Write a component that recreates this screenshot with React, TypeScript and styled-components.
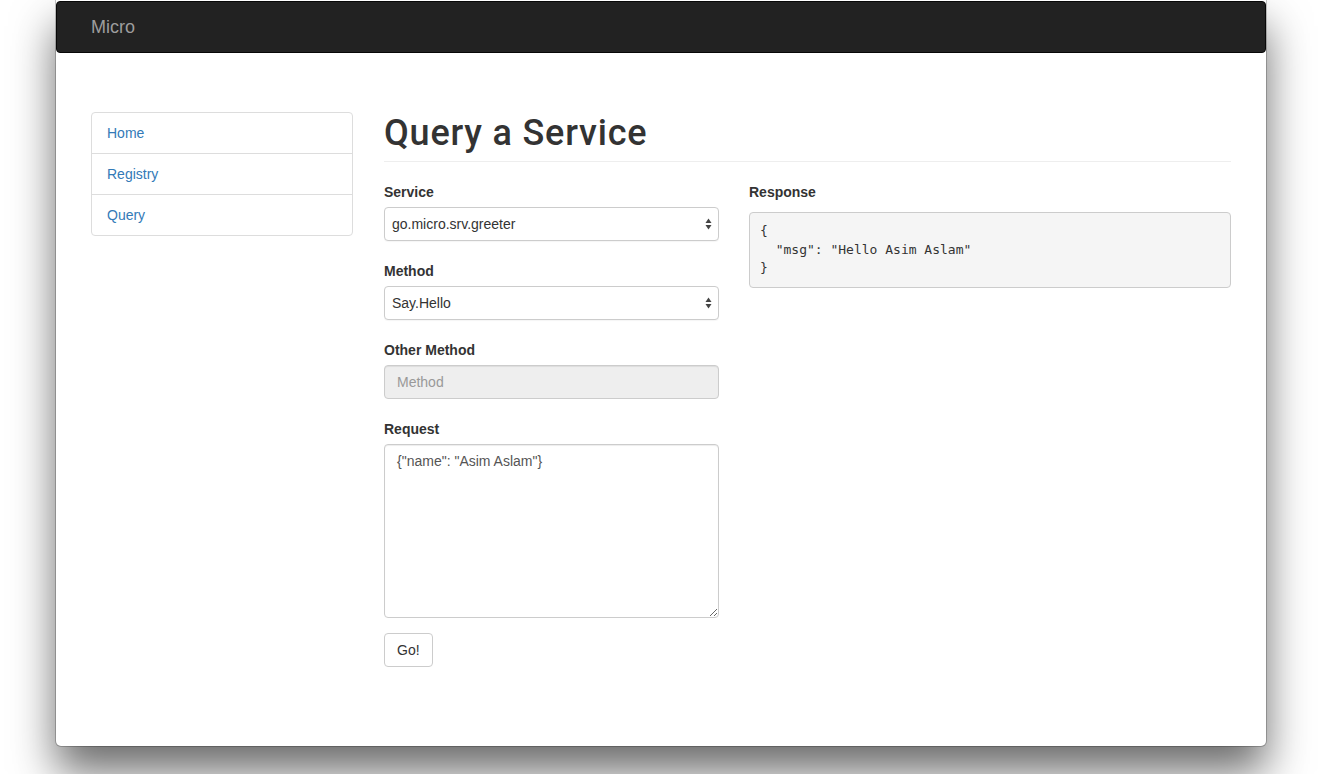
import * as React from 'react';
import styled, { createGlobalStyle } from 'styled-components';

const GlobalStyle = createGlobalStyle`
  html, body {
    margin: 0;
    padding: 0;
    background: #ffffff;
  }
  body {
    font-family: "Liberation Sans", Arial, sans-serif;
    font-size: 14px;
    line-height: 1.42857;
    color: #333;
    overflow: hidden;
  }
  * { box-sizing: border-box; }
`;

const Desktop = styled.div`
  height: 774px;
  padding-left: 56px;
`;

const Window = styled.div`
  width: 1210px;
  height: 746px;
  background: #fff;
  border-radius: 0 0 5px 5px;
  box-shadow: 0 26px 44px rgba(0, 0, 0, 0.58), 0 0 0 1px rgba(0, 0, 0, 0.22);
  overflow: hidden;
`;

const NavBar = styled.div`
  height: 52px;
  margin-top: 1px;
  background: #222;
  border: 1px solid #080808;
  border-radius: 4px;
  padding: 0 20px;
`;

const Brand = styled.div`
  padding: 15px 14px;
  font-size: 18px;
  line-height: 20px;
  color: #9d9d9d;
`;

const Container = styled.div`
  padding: 59px 35px 0;
  display: grid;
  grid-template-columns: 262px 847px;
  column-gap: 31px;
  align-items: start;
`;

const ListGroup = styled.div`
  border: 1px solid #ddd;
  border-radius: 4px;
  background: #fff;
`;

const ListItem = styled.a<{ $last?: boolean }>`
  display: block;
  padding: 10px 15px;
  line-height: 20px;
  color: #337ab7;
  text-decoration: none;
  border-bottom: ${p => (p.$last ? 'none' : '1px solid #ddd')};
`;

const Main = styled.div`
  display: flex;
  flex-direction: column;
`;

const Title = styled.h1`
  margin: 0 0 20px;
  padding-top: 2px;
  padding-bottom: 7px;
  border-bottom: 1px solid #eee;
  font-family: Roboto, "Liberation Sans", Arial, sans-serif;
  font-size: 36px;
  font-weight: 500;
  letter-spacing: 0.8px;
  line-height: 39.6px;
  color: #333;
`;

const Columns = styled.div`
  display: grid;
  grid-template-columns: 335px 482px;
  column-gap: 30px;
  align-items: start;
`;

const Form = styled.div`
  display: flex;
  flex-direction: column;
  gap: 20px;
`;

const Group = styled.div`
  display: flex;
  flex-direction: column;
`;

const Label = styled.label`
  font-weight: bold;
  line-height: 20px;
  margin-bottom: 5px;
`;

const SelectWrap = styled.div`
  position: relative;
`;

const Select = styled.select`
  appearance: none;
  width: 100%;
  height: 34px;
  padding: 0 24px 0 7px;
  font-family: "Liberation Sans", Arial, sans-serif;
  font-size: 14px;
  color: #333;
  background: #fff;
  border: 1px solid #ccc;
  border-radius: 4px;
  box-shadow: 0 1px 1px rgba(0, 0, 0, 0.04);
`;

const Arrows = styled.svg`
  position: absolute;
  right: 7px;
  top: 11px;
  pointer-events: none;
`;

const Input = styled.input`
  height: 34px;
  padding: 6px 12px;
  font-family: "Liberation Sans", Arial, sans-serif;
  font-size: 14px;
  color: #555;
  background: #eee;
  border: 1px solid #ccc;
  border-radius: 4px;
  box-shadow: inset 0 1px 1px rgba(0, 0, 0, 0.075);
  &::placeholder { color: #999; }
`;

const TextArea = styled.textarea`
  height: 174px;
  padding: 6px 12px;
  font-family: "Liberation Sans", Arial, sans-serif;
  font-size: 14px;
  line-height: 20px;
  color: #555;
  background: #fff;
  border: 1px solid #ccc;
  border-radius: 4px;
  resize: vertical;
  box-shadow: inset 0 1px 1px rgba(0, 0, 0, 0.075);
`;

const Button = styled.button`
  align-self: flex-start;
  margin-top: -5px;
  height: 34px;
  padding: 6px 12px;
  font-family: "Liberation Sans", Arial, sans-serif;
  font-size: 14px;
  line-height: 20px;
  color: #333;
  background: #fff;
  border: 1px solid #ccc;
  border-radius: 4px;
`;

const Pre = styled.pre`
  margin: 5px 0 0;
  padding: 9.5px 10px;
  font-family: "DejaVu Sans Mono", Menlo, monospace;
  font-size: 13px;
  line-height: 18.6px;
  color: #333;
  background: #f5f5f5;
  border: 1px solid #ccc;
  border-radius: 4px;
`;

const SelectArrows = () => (
  <Arrows width="7" height="12" viewBox="0 0 7 12">
    <path d="M3.5 0.5 L6.5 5 L0.5 5 Z" fill="#444" />
    <path d="M3.5 11.5 L6.5 7 L0.5 7 Z" fill="#444" />
  </Arrows>
);

export default function App() {
  return (
    <>
      <GlobalStyle />
      <Desktop>
        <Window>
          <NavBar>
            <Brand>Micro</Brand>
          </NavBar>
          <Container>
            <ListGroup>
              <ListItem href="#">Home</ListItem>
              <ListItem href="#">Registry</ListItem>
              <ListItem href="#" $last>Query</ListItem>
            </ListGroup>
            <Main>
              <Title>Query a Service</Title>
              <Columns>
                <Form>
                  <Group>
                    <Label>Service</Label>
                    <SelectWrap>
                      <Select defaultValue="go.micro.srv.greeter">
                        <option>go.micro.srv.greeter</option>
                      </Select>
                      <SelectArrows />
                    </SelectWrap>
                  </Group>
                  <Group>
                    <Label>Method</Label>
                    <SelectWrap>
                      <Select defaultValue="Say.Hello">
                        <option>Say.Hello</option>
                      </Select>
                      <SelectArrows />
                    </SelectWrap>
                  </Group>
                  <Group>
                    <Label>Other Method</Label>
                    <Input placeholder="Method" disabled />
                  </Group>
                  <Group>
                    <Label>Request</Label>
                    <TextArea defaultValue={'{"name": "Asim Aslam"}'} />
                  </Group>
                  <Button>Go!</Button>
                </Form>
                <Group>
                  <Label>Response</Label>
                  <Pre>{'{\n  "msg": "Hello Asim Aslam"\n}'}</Pre>
                </Group>
              </Columns>
            </Main>
          </Container>
        </Window>
      </Desktop>
    </>
  );
}
